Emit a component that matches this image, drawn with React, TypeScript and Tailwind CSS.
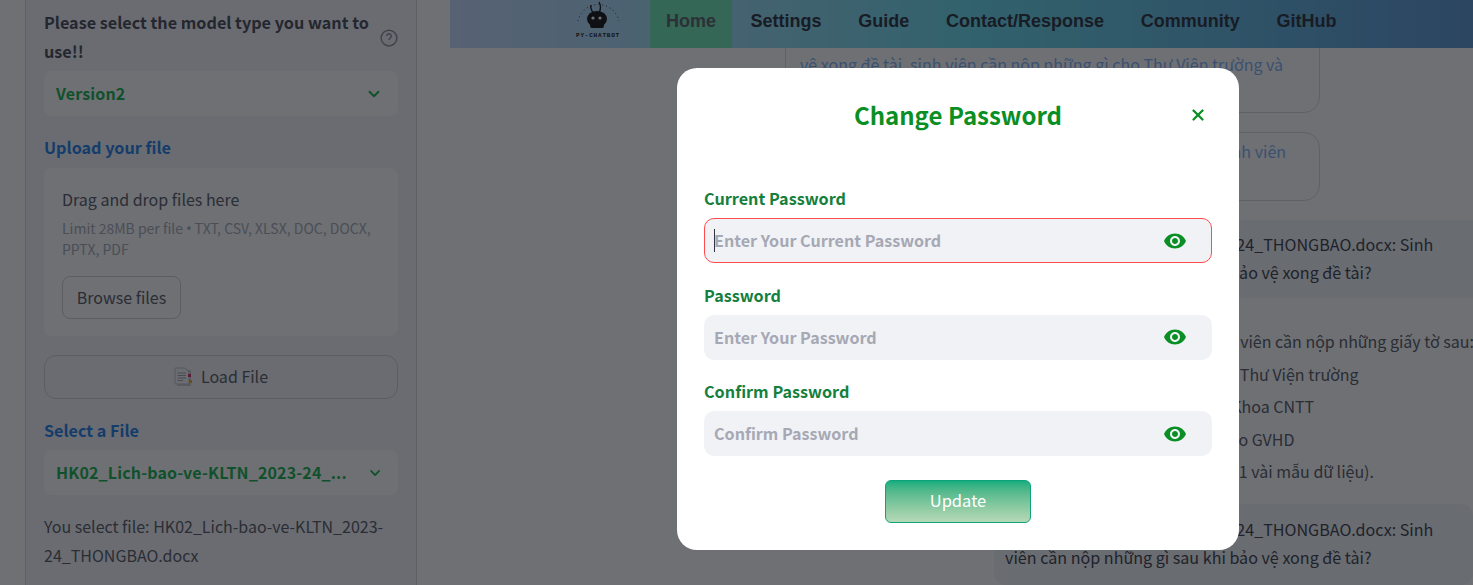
import { ChevronDown, X } from "lucide-react";
import { MdVisibility } from "react-icons/md";

const NAV = ["Settings", "Guide", "Contact/Response", "Community", "GitHub"];

const FIELDS = [
  { label: "Current Password", placeholder: "Enter Your Current Password", active: true },
  { label: "Password", placeholder: "Enter Your Password", active: false },
  { label: "Confirm Password", placeholder: "Confirm Password", active: false },
];

const ANSWER = [
  "Sau khi bảo vệ xong đề tài, sinh viên cần nộp những giấy tờ sau:",
  "1. Nộp báo cáo và sản phẩm tới Thư Viện trường",
  "2. Nộp báo cáo, sản phẩm cho Khoa CNTT",
  "3. Nộp báo cáo, và sản phẩm cho GVHD",
  "4. Nộp đĩa CD (có mã nguồn, và 1 vài mẫu dữ liệu).",
];

function Select({ value }: { value: string }) {
  return (
    <div className="h-[45px] rounded-lg bg-white flex items-center pl-[12px] pr-[15px] gap-5">
      <span className="flex-1 pb-[2px] whitespace-nowrap font-semibold text-[#16b14c] tracking-[0.15px]">{value}</span>
      <ChevronDown size={18} strokeWidth={2.6} className="text-[#16b14c]" />
    </div>
  );
}

function Logo() {
  return (
    <div className="w-[48px] h-[48px] flex flex-col items-center">
      <svg width="47" height="33" viewBox="0 0 47 33">
        <path d="M3 21 A21 21 0 0 1 44 21" fill="none" stroke="#111" strokeWidth="0.9" strokeDasharray="1 3" />
        <path d="M19 14 Q15 9 16 5 M24 13 Q27 7 24 2" stroke="#111" strokeWidth="1.4" fill="none" />
        <ellipse cx="22" cy="19" rx="10" ry="8" fill="#111" />
        <rect x="15" y="24" width="14" height="4" rx="2" fill="#111" />
        <circle cx="18" cy="18" r="1.6" fill="#fff" />
        <circle cx="25" cy="18" r="1.6" fill="#fff" />
      </svg>
      <span className="text-[6px] leading-[6px] font-bold tracking-[0.8px] text-[#111] whitespace-nowrap font-['Liberation_Mono',monospace]">
        PY-CHATBOT
      </span>
    </div>
  );
}

function DocIcon() {
  return (
    <svg width="18" height="20" viewBox="0 0 18 20">
      <rect x="3" y="3" width="14" height="16" rx="1" fill="#c9cbd2" />
      <path d="M1 1 H11 L15 5 V17 H1 Z" fill="#f8f8fa" stroke="#bfc1c8" strokeWidth="1" />
      <path d="M3.5 6 H12 M3.5 8.5 H12 M3.5 11 H12 M3.5 13.5 H9" stroke="#a0a2aa" strokeWidth="1" />
      <rect x="14" y="7" width="3" height="3" fill="#e0246f" />
      <rect x="15" y="13" width="3" height="3" fill="#eab308" />
    </svg>
  );
}

function Sidebar() {
  return (
    <aside className="w-[392px] h-[585px] shrink-0 border-x border-[#d6d8de] bg-[#f6f6f8] px-[18px] pt-[8px] overflow-hidden text-[#565862]">
      <div className="flex items-center gap-2">
        <p className="flex-1 text-[16.2px] leading-[29px] font-semibold text-[#474954]">
          Please select the model type you want to use!!
        </p>
        <svg width="18" height="18" viewBox="0 0 24 24" fill="none" stroke="#8c8e98" strokeWidth="2" className="mt-[1px]">
          <circle cx="12" cy="12" r="10.5" />
          <path d="M9 9.5a3 3 0 1 1 4.6 2.5c-1 .7-1.6 1.3-1.6 2.5" />
          <path d="M12 17.5v.5" />
        </svg>
      </div>
      <div className="mt-[5px]">
        <Select value="Version2" />
      </div>
      <h3 className="mt-[18px] text-[16.2px] leading-[27px] font-semibold text-[#1f80e8]">Upload your file</h3>
      <div className="mt-[7px] h-[168px] rounded-lg bg-white px-[18px] pt-[17px]">
        <p className="text-[16px] leading-[28px]">Drag and drop files here</p>
        <p className="mt-[5px] text-[14px] leading-[20px] text-[#a8aab3]">
          Limit 28MB per file <span className="font-['Noto_Sans',sans-serif]">•</span> TXT, CSV, XLSX, DOC, DOCX, PPTX, PDF
        </p>
        <button className="mt-[17px] h-[43px] w-[119px] rounded-lg border border-[#ced0d6] pb-[2px] text-[16px]">Browse files</button>
      </div>
      <button className="mt-[19px] h-[44px] w-full rounded-xl border border-[#ced0d6] flex items-center justify-center gap-[9px] text-[16px]">
        <DocIcon />
        <span className="pb-[2px]">Load File</span>
      </button>
      <h3 className="mt-[18px] text-[16.2px] leading-[27px] font-semibold text-[#1f80e8]">Select a File</h3>
      <div className="mt-[6px]">
        <Select value="HK02_Lich-bao-ve-KLTN_2023-24_..." />
      </div>
      <p className="mt-[17px] text-[16px] leading-[29px]">You select file: HK02_Lich-bao-ve-KLTN_2023-24_THONGBAO.docx</p>
    </aside>
  );
}

function Question({ rounded }: { rounded?: boolean }) {
  return (
    <div className={`ml-[209px] w-[479px] bg-[#f3f4f6] px-[11px] text-[16.1px] text-[#3c3e49] ${rounded ? "h-[81px] rounded-xl pt-[11px]" : "h-[78px] pt-[10px]"}`}>
      <p>HK02_Lich-bao-ve-KLTN_2023-24_THONGBAO.docx: Sinh</p>
      <p>viên cần nộp những gì sau khi bảo vệ xong đề tài?</p>
    </div>
  );
}

function Main() {
  return (
    <main className="flex-1 min-w-0 flex flex-col h-[585px] overflow-hidden bg-white">
      <nav className="h-[48px] shrink-0 flex items-center pl-[124px] bg-gradient-to-r from-[#c6dcff] via-[#69dcec] to-[#5a96d2]">
        <Logo />
        <a className="ml-[28px] h-full flex items-center px-4 pb-[6px] bg-[#72e8b4] text-[18px] font-bold font-['Liberation_Sans',sans-serif] text-[#5a6068]">Home</a>
        {NAV.map((item) => (
          <a key={item} className="px-[18.4px] pb-[6px] text-[18px] font-bold font-['Liberation_Sans',sans-serif] text-[#2a2d37]">
            {item}
          </a>
        ))}
      </nav>
      <div className="flex-1 overflow-hidden pl-[335px] text-[16.05px] leading-[28px] whitespace-nowrap">
        <div className="w-[535px] -mt-[20px] h-[85px] rounded-b-2xl border border-[#d9dadf] px-[14px] pt-[21px] text-[#7fb0f5]">
          <p>vệ xong đề tài, sinh viên cần nộp những gì cho Thư Viện trường và</p>
        </div>
        <div className="mt-[19px] w-[535px] h-[69px] rounded-2xl border border-[#d9dadf] pl-[8px] pt-[4px] text-[#7fb0f5]">
          <p>Sau khi bảo vệ xong đề tài thì sẽ cần nộp những gì đối với sinh viên</p>
        </div>
        <div className="mt-[19px]">
          <Question />
        </div>
        <div className="ml-[220px] mt-[27px] text-[16px] text-[#565862] leading-[32.5px]">
          {ANSWER.map((line) => (
            <p key={line}>{line}</p>
          ))}
        </div>
        <div className="mt-[16px]">
          <Question rounded />
        </div>
      </div>
    </main>
  );
}

function PasswordField({ label, placeholder, active }: { label: string; placeholder: string; active: boolean }) {
  return (
    <div className="h-[96.5px]">
      <p className="text-[16.2px] leading-[22px] font-semibold text-[#15803d]">{label}</p>
      <div className={`mt-[9px] h-[45px] rounded-[10px] bg-[#f0f2f6] flex items-center ${active ? "border border-[#ff4b4b] pl-[9px] pr-[24px]" : "pl-[10px] pr-[25px]"}`}>
        {active && <span className="w-px h-[23px] bg-[#31333f]" />}
        <span className={`flex-1 text-[16.1px] font-semibold text-[#a6a8b4] ${active ? "-ml-px" : ""}`}>{placeholder}</span>
        <MdVisibility size={24} className="text-[#0a8f24]" />
      </div>
    </div>
  );
}

function PasswordModal() {
  return (
    <div className="absolute left-[677px] top-[68px] w-[562px] h-[482px] rounded-[20px] bg-white px-[27px]">
      <div className="relative h-[95px] flex justify-center pt-[28px]">
        <h2 className="text-[24px] leading-[38px] font-bold text-[#0a8f24]">Change Password</h2>
        <X size={18} strokeWidth={3} className="absolute right-[5px] top-[38px] text-[#0a8f24]" />
      </div>
      <div className="mt-[24px]">
        {FIELDS.map((f) => (
          <PasswordField key={f.label} {...f} />
        ))}
      </div>
      <div className="flex justify-center mt-[3px]">
        <button className="w-[146px] h-[43px] rounded-md border border-[#10a37a] pb-[2px] bg-gradient-to-b from-[#0fae7f] to-[#b6d9b6] text-white text-[16.5px]">
          Update
        </button>
      </div>
    </div>
  );
}

export default function App() {
  return (
    <div className="relative w-[1473px] h-[585px] overflow-hidden flex bg-white font-['Noto_Sans_CJK_SC','Noto_Sans',sans-serif]">
      <div className="w-[450px] shrink-0 flex pl-[25px]">
        <Sidebar />
      </div>
      <Main />
      <div className="absolute inset-0 bg-[#0e1117]/60" />
      <PasswordModal />
    </div>
  );
}
